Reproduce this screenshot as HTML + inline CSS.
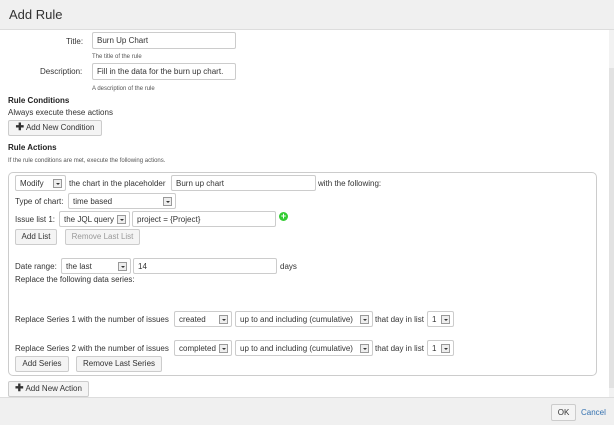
<!DOCTYPE html>
<html><head><meta charset="utf-8"><style>
*{box-sizing:border-box;margin:0;padding:0}
body{width:614px;height:425px;overflow:hidden;background:#fff;font-family:"Liberation Sans",Arial,sans-serif;font-size:8px;color:#333;position:relative}
.a{position:absolute;white-space:nowrap}
.hdr{left:0;top:0;width:614px;height:30px;background:#f0f0f0;border-bottom:1px solid #ddd}
.hdr span{position:absolute;left:9px;top:7px;font-size:13px;color:#333}
.ftr{left:0;top:397px;width:614px;height:28px;background:#f0f0f0;border-top:1px solid #ddd}
.inp{position:absolute;border:1px solid #ccc;border-radius:2px;background:#fff;padding:1px 0 0 4px;line-height:14px;height:17px;color:#333}
.sel{position:absolute;border:1px solid #ccc;border-radius:2px;background:#fff;padding:1px 0 0 4px;line-height:13px;height:16px}
.sel i{position:absolute;right:3px;top:3px;width:9px;height:9px;border:1px solid #999;background:#eee}
.sel i:after{content:"";position:absolute;left:2px;top:3px;border-left:2px solid transparent;border-right:2px solid transparent;border-top:2px solid #333}
.btn{position:absolute;border:1px solid #ccc;border-radius:2px;background:#f4f4f4;text-align:center;line-height:14px;height:16px;color:#333}
.s{font-size:6px;color:#555}
b{font-weight:bold;color:#222}
.plus{font-weight:bold;font-size:10px;margin-right:2px}
</style></head><body>
<div class="a hdr"><span>Add Rule</span></div>
<div class="a" style="left:609px;top:30px;width:5px;height:367px;background:#f2f2f2"></div>
<div class="a" style="left:609px;top:68px;width:5px;height:320px;background:#e2e2e2"></div>

<div class="a" style="left:66px;top:37px">Title:</div>
<div class="inp" style="left:92px;top:32px;width:144px">Burn Up Chart</div>
<div class="a s" style="left:92px;top:54px">The title of the rule</div>
<div class="a" style="left:40px;top:67px">Description:</div>
<div class="inp" style="left:92px;top:63px;width:144px">Fill in the data for the burn up chart.</div>
<div class="a s" style="left:92px;top:86px">A description of the rule</div>
<div class="a" style="left:8px;top:96px"><b>Rule Conditions</b></div>
<div class="a" style="left:8px;top:108px">Always execute these actions</div>
<div class="btn" style="left:8px;top:120px;width:94px;height:16px"><span class="plus">✚</span>Add New Condition</div>
<div class="a" style="left:8px;top:143px"><b>Rule Actions</b></div>
<div class="a s" style="left:8px;top:158px">If the rule conditions are met, execute the following actions.</div>

<div class="a" style="left:8px;top:172px;width:589px;height:204px;border:1px solid #ccc;border-radius:5px"></div>
<div class="sel" style="left:15px;top:175px;width:51px">Modify<i></i></div>
<div class="a" style="left:69px;top:179px">the chart in the placeholder</div>
<div class="inp" style="left:171px;top:175px;width:145px;height:16px;line-height:13px">Burn up chart</div>
<div class="a" style="left:318px;top:179px">with the following:</div>
<div class="a" style="left:15px;top:197px">Type of chart:</div>
<div class="sel" style="left:68px;top:193px;width:108px">time based<i></i></div>
<div class="a" style="left:15px;top:215px">Issue list 1:</div>
<div class="sel" style="left:59px;top:211px;width:71px">the JQL query<i></i></div>
<div class="inp" style="left:132px;top:211px;width:144px;height:16px;line-height:13px">project = {Project}</div>
<div class="a" style="left:279px;top:212px;width:9px;height:9px;border-radius:50%;background:#3c3;color:#fff;font-size:9px;line-height:9px;text-align:center;font-weight:bold">+</div>
<div class="btn" style="left:15px;top:229px;width:42px">Add List</div>
<div class="btn" style="left:65px;top:229px;width:75px;color:#999">Remove Last List</div>
<div class="a" style="left:15px;top:262px">Date range:</div>
<div class="sel" style="left:61px;top:258px;width:70px">the last<i></i></div>
<div class="inp" style="left:133px;top:258px;width:144px;height:16px;line-height:13px">14</div>
<div class="a" style="left:280px;top:262px">days</div>
<div class="a" style="left:15px;top:275px">Replace the following data series:</div>

<div class="a" style="left:15px;top:315px">Replace Series 1 with the number of issues</div>
<div class="sel" style="left:174px;top:311px;width:58px">created<i></i></div>
<div class="sel" style="left:235px;top:311px;width:138px">up to and including (cumulative)<i></i></div>
<div class="a" style="left:375px;top:315px">that day in list</div>
<div class="sel" style="left:427px;top:311px;width:27px">1<i></i></div>
<div class="a" style="left:15px;top:344px">Replace Series 2 with the number of issues</div>
<div class="sel" style="left:174px;top:340px;width:58px">completed<i></i></div>
<div class="sel" style="left:235px;top:340px;width:138px">up to and including (cumulative)<i></i></div>
<div class="a" style="left:375px;top:344px">that day in list</div>
<div class="sel" style="left:427px;top:340px;width:27px">1<i></i></div>
<div class="btn" style="left:15px;top:356px;width:54px">Add Series</div>
<div class="btn" style="left:76px;top:356px;width:86px">Remove Last Series</div>
<div class="btn" style="left:8px;top:381px;width:81px"><span class="plus">✚</span>Add New Action</div>

<div class="a ftr"></div>
<div class="btn" style="left:551px;top:404px;width:25px;height:17px;line-height:15px">OK</div>
<div class="a" style="left:581px;top:408px;color:#3572b0">Cancel</div>
</body></html>
